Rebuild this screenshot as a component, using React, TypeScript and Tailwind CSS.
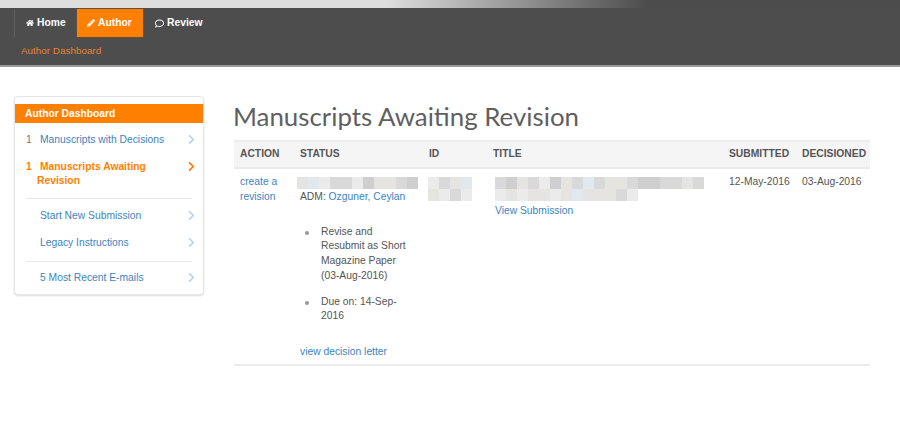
import { FaChevronRight, FaHome, FaPencilAlt, FaRegComment } from "react-icons/fa";

function Redacted({ rows }: { rows: string[][] }) {
  return (
    <div className="flex flex-col">
      {rows.map((row, i) => (
        <div key={i} className="flex h-[12px]">
          {row.map((color, j) => (
            <div key={j} className="w-[11px] h-[12px]" style={{ backgroundColor: color }} />
          ))}
        </div>
      ))}
    </div>
  );
}

function SideLink({ count, label, active }: { count?: string; label: string; active?: boolean }) {
  return (
    <div className={`flex items-start justify-between pl-[11px] pr-[8px] ${active ? "text-[#ff7f00] font-bold" : "text-[#3d84bf]"}`}>
      <div className="flex">
        <span className={`w-[14px] shrink-0 ${active ? "" : "text-[#777]"}`}>{count}</span>
        <span className={active ? "w-[125px] -ml-[3px] indent-[3px]" : ""}>{label}</span>
      </div>
      <FaChevronRight className={`mt-[1px] w-[7px] h-[11px] ${active ? "text-[#ff7f00]" : "text-[#b5d7ea]"}`} />
    </div>
  );
}

function Bullet({ children, className }: { children: string; className?: string }) {
  return (
    <li className={`flex items-start ${className ?? ""}`}>
      <span className="w-[4px] h-[4px] mt-[6px] ml-[5px] mr-[12px] shrink-0 rounded-full bg-[#999]" />
      <span>{children}</span>
    </li>
  );
}

const c1 = "#e6e4e0";
const c2 = "#e2e9ee";
const c3 = "#d9d9d9";
const c4 = "#cfcfcf";
const c5 = "#ebebeb";

export default function App() {
  return (
    <div className="w-[900px] h-[428px] overflow-hidden bg-white text-[10.3px] leading-[14.7px] text-[#555] font-['Liberation_Sans',Arial,sans-serif]">
      <div className="h-2 bg-[linear-gradient(to_right,#dedede_0%,#dedede_43%,#4c4c4c_72%,#4c4c4c_100%)]" />
      <header className="h-[59px] bg-[#4d4d4d] border-b-2 border-[#9a9a9a]">
        <nav className="flex h-[29px] pl-[14px] pt-[1px] font-bold text-white">
          <div className="flex items-center gap-[3px] w-[63px] pl-[11px] border-l border-[#5e5e5e]">
            <FaHome className="w-[8px] h-[8px]" />
            Home
          </div>
          <div className="flex items-center gap-[3px] w-[66px] pl-[10px] bg-[#ff7f00] shadow-[0_0_1px_#c06000]">
            <FaPencilAlt className="w-[8px] h-[8px]" />
            Author
          </div>
          <div className="flex items-center gap-[3px] pl-[12px]">
            <FaRegComment className="w-[9px] h-[9px]" />
            Review
          </div>
        </nav>
        <div className="pl-[21px] pt-[7px] text-[9.9px] text-[#e5832f]">Author Dashboard</div>
      </header>

      <main className="flex pt-[29px] pl-[14px]">
        <aside className="w-[190px] h-[199px] shrink-0 bg-white border border-[#e6e6e6] rounded-[4px] shadow-[0_1px_2px_#ddd]">
          <h2 className="h-[19px] mt-[7px] pl-[10px] leading-[19px] bg-[#ff7f00] text-white font-bold">Author Dashboard</h2>
          <div className="pt-[10px]">
            <SideLink count="1" label="Manuscripts with Decisions" />
            <div className="h-[12px]" />
            <SideLink count="1" label="Manuscripts Awaiting Revision" active />
            <div className="h-px mx-[11px] mt-[9px] mb-[10px] bg-[#e8e8e8]" />
            <SideLink label="Start New Submission" />
            <div className="h-[12px]" />
            <SideLink label="Legacy Instructions" />
            <div className="h-px mx-[11px] mt-[10px] mb-[9px] bg-[#e8e8e8]" />
            <SideLink label="5 Most Recent E-mails" />
          </div>
        </aside>

        <section className="w-[636px] ml-[30px]">
          <h1 className="h-[44px] pt-[5px] -ml-[1px] text-[25.85px] leading-[30px] text-[#5f5f5f] font-['Lato',sans-serif]">
            Manuscripts Awaiting Revision
          </h1>
          <table className="w-full table-fixed border-collapse">
            <colgroup>
              <col className="w-[60px]" />
              <col className="w-[129px]" />
              <col className="w-[64px]" />
              <col className="w-[236px]" />
              <col className="w-[73px]" />
              <col className="w-[74px]" />
            </colgroup>
            <thead>
              <tr className="h-[27px] bg-[#f5f5f5] border-t-2 border-b-2 border-[#ececec] text-left text-[#555]">
                <th className="pl-[6px] font-bold">ACTION</th>
                <th className="pl-[6px] font-bold">STATUS</th>
                <th className="pl-[6px] font-bold">ID</th>
                <th className="pl-[6px] font-bold">TITLE</th>
                <th className="pl-[6px] font-bold whitespace-nowrap">SUBMITTED</th>
                <th className="pl-[6px] font-bold whitespace-nowrap">DECISIONED</th>
              </tr>
            </thead>
            <tbody>
              <tr className="h-[197px] align-top border-b-2 border-[#ececec]">
                <td className="pl-[6px] pr-[8px] pt-[6px] text-[#3d84bf]">create a revision</td>
                <td className="pl-[6px] pt-[6px]">
                  <div className="h-[15px] -ml-[3px] pt-[2px] blur-[0.6px]">
                    <Redacted rows={[[c1, c2, c5, c3, c3, c5, c4, c1, c1, c3, c4]]} />
                  </div>
                  <div>
                    ADM: <span className="text-[#3d84bf]">Ozguner, Ceylan</span>
                  </div>
                  <ul className="mt-[20px] pr-[12px]">
                    <Bullet>Revise and Resubmit as Short Magazine Paper (03-Aug-2016)</Bullet>
                    <Bullet className="mt-[11px]">Due on: 14-Sep-2016</Bullet>
                  </ul>
                  <div className="mt-[21px] text-[#3d84bf]">view decision letter</div>
                </td>
                <td className="pl-[6px] pt-[8px]">
                  <div className="-ml-[1px] blur-[0.6px]">
                    <Redacted
                      rows={[
                        [c5, c3, c1, c2],
                        [c1, c5, c3, c5],
                      ]}
                    />
                  </div>
                </td>
                <td className="pl-[6px] pt-[8px]">
                  <div className="ml-[2px] h-[27px] blur-[0.6px]">
                    <Redacted
                      rows={[
                        [c3, c4, c1, c3, c5, c4, c1, c3, c2, c3, c1, c1, c3, c4, c4, c3, c3, c1, c3],
                        [c5, c1, c5, c1, c1, c5, c1, c2, c1, c1, c1, c3, c5],
                      ]}
                    />
                  </div>
                  <div className="pl-[2px] text-[#3d84bf]">View Submission</div>
                </td>
                <td className="pl-[6px] pt-[6px] whitespace-nowrap">12-May-2016</td>
                <td className="pl-[6px] pt-[6px] whitespace-nowrap">03-Aug-2016</td>
              </tr>
            </tbody>
          </table>
        </section>
      </main>
    </div>
  );
}
